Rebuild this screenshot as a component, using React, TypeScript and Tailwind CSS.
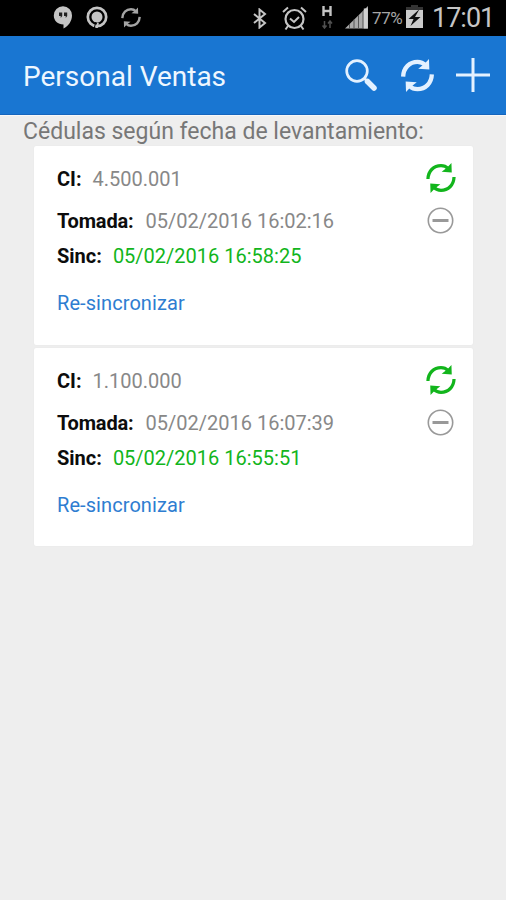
import React from "react";

type SyncProps = { className: string; weight: number };

function SyncIcon({ className, weight }: SyncProps) {
  return (
    <svg viewBox="0 0 92 96" className={className} fill="none" stroke="currentColor" strokeWidth={weight}>
      <path d="M6 51C7 26 24 10 46 10c9 0 16 3 22 9" />
      <path d="M86 45c-1 25-18 41-40 41-9 0-16-3-22-9" />
      <path d="M78 2l1 29-31-2 17-13Z" fill="currentColor" stroke="none" />
      <path d="M14 94l-1-29 31 2-17 13Z" fill="currentColor" stroke="none" />
    </svg>
  );
}

function StatusBar() {
  return (
    <div className="flex h-[36px] shrink-0 items-start bg-black text-[#c4c4c4]">
      <svg viewBox="0 0 20 23" className="ml-[53px] mt-[6px] h-[23px] w-[20px]">
        <path d="M10 .3a9.200 9 0 0 0-9.200 9.200c0 5.200 4 9 9.700 9V22.500c5-2.500 8.500-7.500 8.500-13A9.200 9 0 0 0 10 .3Z" fill="currentColor" />
        <path d="M6 6.500h3.200v3.500l-1.500 2V10H6ZM11 6.500h3.200v3.500l-1.500 2V10H11Z" fill="#202020" />
      </svg>
      <svg viewBox="0 0 22 22" className="ml-[13px] mt-[6px] h-[22px] w-[22px]">
        <circle cx="11" cy="11" r="9.200" fill="none" stroke="currentColor" strokeWidth="2.700" />
        <circle cx="11" cy="11" r="5.500" fill="currentColor" />
        <path d="M9.300 22l2-5.500 1.500.5-1 5Z" fill="currentColor" />
        <path d="M9.800 16l-1.500 6" stroke="#000" fill="none" />
      </svg>
      <SyncIcon className="ml-[13px] mt-[7px] h-[21px] w-[20px] text-[#a4a4a4]" weight={11} />

      <svg viewBox="0 0 14 21" className="ml-[112px] mt-[8px] h-[21px] w-[14px]" fill="none" stroke="currentColor" strokeWidth="2">
        <path d="M1 6l11 9-5.500 4.500v-18L12 6 1 15" />
      </svg>
      <svg viewBox="0 0 25 25" className="ml-[15px] mt-[6px] h-[25px] w-[25px]" fill="none" stroke="currentColor" strokeWidth="2">
        <circle cx="12.500" cy="13" r="9" strokeWidth="2.200" />
        <path d="M8 12.500l4 3.500 5-5M1 6l5-4.500M24 6l-5-4.500M6 20l-2.500 3.500M19 20l2.500 3.500" />
      </svg>
      <svg viewBox="0 0 12 23" className="ml-[15px] mt-[6px] h-[23px] w-[12px]" fill="none">
        <path d="M1.500 0v10M8.500 0v10M1.500 5h7" stroke="currentColor" strokeWidth="2.400" />
        <path d="M2.500 15v7M.5 19.500l2 2.500 2-2.500M8 22v-7M6 17.500l2-2.500 2 2.500" stroke="#505050" strokeWidth="1.500" />
      </svg>
      <svg viewBox="0 0 24 23" className="ml-[11px] mt-[6px] h-[23px] w-[24px]">
        <path d="M0 22.500L23 0v22.500Z" fill="#aaaaaa" />
        <path d="M4.500 18v4.500M9 13.500v9M13.500 9v13.500M18 5v17.500" stroke="#555" strokeWidth="1" />
        <path d="M20.800 2.500v20" stroke="#d0d0d0" strokeWidth="4" />
      </svg>
      <span className="ml-[3px] mt-[8px] w-[33px] whitespace-nowrap text-[17px] leading-[20px] tracking-[-0.4px] text-[#a6a6a6]">77%</span>
      <svg viewBox="0 0 19 24" className="mt-[5px] h-[24px] w-[19px]">
        <path d="M6 0h7v2h5v3H1V2h5Z" fill="#343434" />
        <path d="M1 5h17v18H1Z" fill="#cbcbcb" />
        <path d="M13.500 5L3.500 14h5l-3 7 10-9H10l4-7Z" fill="#111" />
      </svg>
      <span className="ml-[8px] mt-[3px] whitespace-nowrap text-[27px] leading-[30px] tracking-[-1px] text-[#c6c6c6]">17:01</span>
    </div>
  );
}

function AppBar() {
  return (
    <header className="flex h-[79px] shrink-0 items-center border-b border-[#1565bd] bg-[#1976d2] pl-[23px] pr-[16px] text-[#e4f1ff]">
      <h1 className="flex-1 whitespace-nowrap pt-[3px] text-[28px] leading-[34px] text-[#eef7ff]">Personal Ventas</h1>
      <svg viewBox="0 0 33 33" className="h-[33px] w-[33px]" fill="none" stroke="currentColor">
        <circle cx="12" cy="12" r="10.300" strokeWidth="2.700" />
        <path d="M19 19l4 4" strokeWidth="2.500" />
        <path d="M22.500 22.500l6.500 6.500" strokeWidth="5.500" strokeLinecap="round" />
      </svg>
      <SyncIcon className="ml-[23px] h-[35px] w-[33px]" weight={12} />
      <svg viewBox="0 0 34 34" className="ml-[22px] h-[34px] w-[34px]" fill="none" stroke="currentColor" strokeWidth="3">
        <path d="M17 0v34M0 17h34" />
      </svg>
    </header>
  );
}

type Survey = { ci: string; taken: string; synced: string };

const surveys: Survey[] = [
  { ci: "4.500.001", taken: "05/02/2016 16:02:16", synced: "05/02/2016 16:58:25" },
  { ci: "1.100.000", taken: "05/02/2016 16:07:39", synced: "05/02/2016 16:55:51" },
];

function SurveyCard({ ci, taken, synced }: Survey) {
  return (
    <article className="flex h-[198.5px] justify-between rounded-[2px] bg-white pl-[23px] pr-[17px] text-[20px] leading-[24px] shadow-[0_0_1px_#dddddd]">
      <div className="flex flex-col items-start whitespace-nowrap pt-[21px] text-[#888888]">
        <div className="flex gap-[11px]">
          <b className="font-bold text-[#0c0c0c]">CI:</b>
          <span>{ci}</span>
        </div>
        <div className="mt-[18px] flex gap-[12px]">
          <b className="font-bold tracking-[-0.15px] text-[#0c0c0c]">Tomada:</b>
          <span>{taken}</span>
        </div>
        <div className="mt-[11px] flex gap-[11px]">
          <b className="font-bold text-[#0c0c0c]">Sinc:</b>
          <span className="text-[#12b51c]">{synced}</span>
        </div>
        <button className="mt-[23px] tracking-[0.08px] text-[#2e7dd1]">Re-sincronizar</button>
      </div>
      <div className="flex flex-col items-center pt-[16px]">
        <SyncIcon className="h-[32px] w-[30px] text-[#12b51c]" weight={10} />
        <svg viewBox="0 0 27 27" className="mr-[1px] mt-[13px] h-[27px] w-[27px]" fill="none" stroke="#999999">
          <circle cx="13.500" cy="13.500" r="12.200" strokeWidth="1.600" />
          <path d="M5.500 13.500h16" strokeWidth="3" />
        </svg>
      </div>
    </article>
  );
}

export default function App() {
  return (
    <div className="flex h-[900px] w-[506px] flex-col overflow-hidden bg-[#eeeeee] font-[Roboto,sans-serif]">
      <StatusBar />
      <AppBar />
      <main className="flex flex-col border-t border-[#f8f8f8]">
        <h2 className="h-[30px] whitespace-nowrap pl-[23px] pt-[2px] text-[23px] leading-[28px] text-[#777777]">
          Cédulas según fecha de levantamiento:
        </h2>
        <div className="flex flex-col gap-[3px] pl-[34px] pr-[33px]">
          {surveys.map((survey) => (
            <SurveyCard key={survey.ci} {...survey} />
          ))}
        </div>
      </main>
    </div>
  );
}
